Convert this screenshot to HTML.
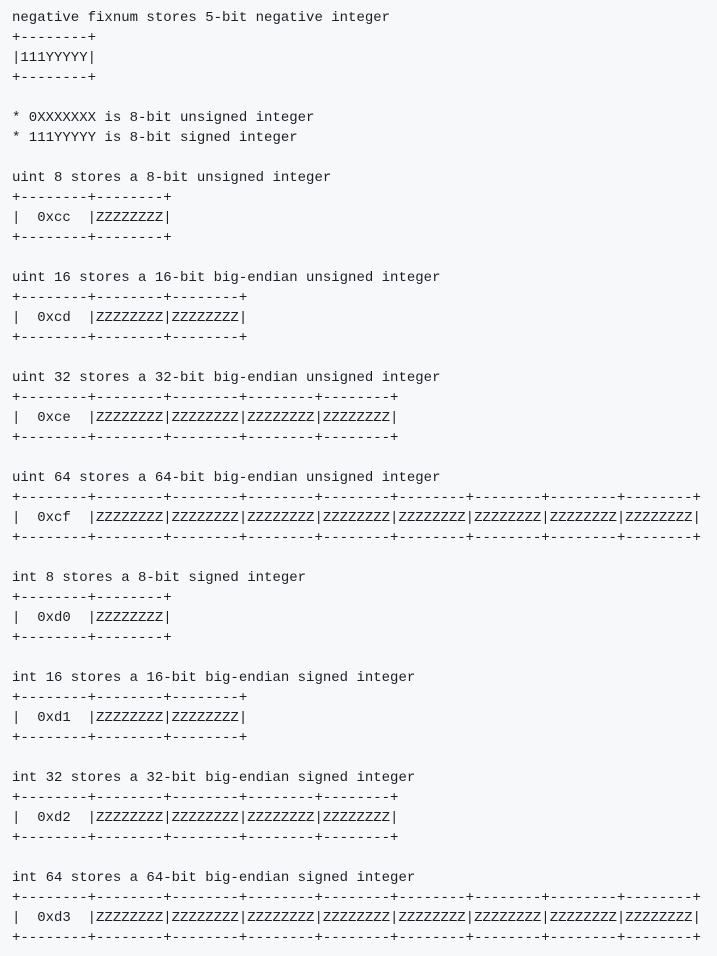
<!DOCTYPE html>
<html><head><style>
html,body{margin:0;padding:0;background:#f6f8fa;}
pre{margin:0;padding:8px 12px;font-family:"Liberation Mono",monospace;font-size:14px;line-height:20px;color:#1b1f23;white-space:pre;overflow:hidden;}
</style></head><body><pre>negative fixnum stores 5-bit negative integer
+--------+
|111YYYYY|
+--------+

* 0XXXXXXX is 8-bit unsigned integer
* 111YYYYY is 8-bit signed integer

uint 8 stores a 8-bit unsigned integer
+--------+--------+
|  0xcc  |ZZZZZZZZ|
+--------+--------+

uint 16 stores a 16-bit big-endian unsigned integer
+--------+--------+--------+
|  0xcd  |ZZZZZZZZ|ZZZZZZZZ|
+--------+--------+--------+

uint 32 stores a 32-bit big-endian unsigned integer
+--------+--------+--------+--------+--------+
|  0xce  |ZZZZZZZZ|ZZZZZZZZ|ZZZZZZZZ|ZZZZZZZZ|
+--------+--------+--------+--------+--------+

uint 64 stores a 64-bit big-endian unsigned integer
+--------+--------+--------+--------+--------+--------+--------+--------+--------+
|  0xcf  |ZZZZZZZZ|ZZZZZZZZ|ZZZZZZZZ|ZZZZZZZZ|ZZZZZZZZ|ZZZZZZZZ|ZZZZZZZZ|ZZZZZZZZ|
+--------+--------+--------+--------+--------+--------+--------+--------+--------+

int 8 stores a 8-bit signed integer
+--------+--------+
|  0xd0  |ZZZZZZZZ|
+--------+--------+

int 16 stores a 16-bit big-endian signed integer
+--------+--------+--------+
|  0xd1  |ZZZZZZZZ|ZZZZZZZZ|
+--------+--------+--------+

int 32 stores a 32-bit big-endian signed integer
+--------+--------+--------+--------+--------+
|  0xd2  |ZZZZZZZZ|ZZZZZZZZ|ZZZZZZZZ|ZZZZZZZZ|
+--------+--------+--------+--------+--------+

int 64 stores a 64-bit big-endian signed integer
+--------+--------+--------+--------+--------+--------+--------+--------+--------+
|  0xd3  |ZZZZZZZZ|ZZZZZZZZ|ZZZZZZZZ|ZZZZZZZZ|ZZZZZZZZ|ZZZZZZZZ|ZZZZZZZZ|ZZZZZZZZ|
+--------+--------+--------+--------+--------+--------+--------+--------+--------+
</pre></body></html>
